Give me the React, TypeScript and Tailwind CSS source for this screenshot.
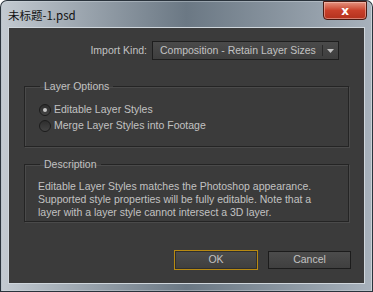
import React, { useState } from "react";

const font = { fontFamily: '"Liberation Sans", Arial, sans-serif' };

function Radio({ checked, label, onClick }: { checked: boolean; label: string; onClick: () => void }) {
  return (
    <button type="button" onClick={onClick} className="flex items-center gap-[3px] h-[16px] text-[10.5px] text-[#c2c2c2]">
      <span className="w-[12px] h-[12px] rounded-full border border-[#1c1c1c] bg-gradient-to-b from-[#2e2e2e] to-[#444] flex items-center justify-center">
        {checked && <span className="w-[4px] h-[4px] rounded-full bg-[#c8c8c8]" />}
      </span>
      <span>{label}</span>
    </button>
  );
}

function Group({ title, className, children }: { title: string; className?: string; children: React.ReactNode }) {
  return (
    <fieldset className={"border border-[#242424] shadow-[inset_1px_1px_0_#4a4a4a,1px_1px_0_#4a4a4a] px-[13px] " + (className ?? "")}>
      <legend className="ml-[2px] px-[4px] text-[10.5px] text-[#c2c2c2] leading-[14px]">{title}</legend>
      {children}
    </fieldset>
  );
}

export default function App() {
  const [editable, setEditable] = useState(true);

  return (
    <div style={font} className="w-[373px] h-[292px] bg-[#2a333c] p-[1px] rounded-t-[7px]">
      <div className="w-full h-full rounded-t-[6px] bg-gradient-to-r from-[#c3cad1] via-[#6b7884] to-[#a7b1bb] flex flex-col border border-[#d8dee4]/40">
        {/* title bar */}
        <div className="h-[25px] flex items-start justify-between">
          <span
            className="pl-[6px] pt-[5px] text-[11.5px] leading-[16px] text-[#111]"
            style={{ fontFamily: '"Noto Sans CJK SC", "Liberation Sans", sans-serif' }}
          >
            未标题-1.psd
          </span>
          <div className="mr-[4px] mt-[-1px] w-[44px] h-[19px] rounded-b-[4px] border border-[#4a1a12] bg-gradient-to-b from-[#e3927f] via-[#c8402a] to-[#b4311d] shadow-[inset_0_0_0_1px_rgba(255,220,210,0.45)] flex items-center justify-center">
            <span className="text-white text-[12px] font-bold leading-none" style={{ fontFamily: '"DejaVu Sans", sans-serif' }}>x</span>
          </div>
        </div>

        {/* content */}
        <div className="flex-1 mx-[6px] mb-[6px] border border-[#cfd6dc] bg-[#3b3b3b] flex flex-col">
          <div className="flex items-center justify-end pr-[25px] mt-[13px] gap-[5px]">
            <span className="text-[10.5px] text-[#c2c2c2] whitespace-nowrap">Import Kind:</span>
            <div className="w-[187px] h-[19px] border border-[#1e1e1e] bg-gradient-to-b from-[#4a4a4a] to-[#3e3e3e] flex items-center text-[10.5px] text-[#c2c2c2]">
              <span className="flex-1 pl-[7px] whitespace-nowrap">Composition - Retain Layer Sizes</span>
              <span className="w-px h-[11px] bg-[#2a2a2a]" />
              <span className="w-[15px] flex justify-center">
                <svg width="7" height="4" viewBox="0 0 7 4"><path d="M0 0h7L3.5 4z" fill="#c2c2c2" /></svg>
              </span>
            </div>
          </div>

          <Group title="Layer Options" className="mx-[15px] mt-[19px] h-[68px] pt-[9px]">
            <div className="flex flex-col items-start pl-[1px]">
              <Radio checked={editable} label="Editable Layer Styles" onClick={() => setEditable(true)} />
              <Radio checked={!editable} label="Merge Layer Styles into Footage" onClick={() => setEditable(false)} />
            </div>
          </Group>

          <Group title="Description" className="mx-[15px] mt-[10px] h-[65px] pt-[9px]">
            <p className="pl-[0px] text-[10.5px] leading-[13px] text-[#c2c2c2] whitespace-nowrap">
              Editable Layer Styles matches the Photoshop appearance.
              <br />
              Supported style properties will be fully editable. Note that a
              <br />
              layer with a layer style cannot intersect a 3D layer.
            </p>
          </Group>

          <div className="flex justify-end gap-[10px] pr-[13px] mt-[28px]">
            <button className="w-[84px] h-[20px] border border-[#b88a12] bg-[#2e2e2e] p-px">
              <span className="w-full h-full flex items-center justify-center bg-gradient-to-b from-[#4c4c4c] to-[#3f3f3f] text-[10.5px] text-[#c2c2c2]">OK</span>
            </button>
            <button className="w-[83px] h-[18px] mt-px border border-[#1c1c1c] bg-gradient-to-b from-[#4c4c4c] to-[#3f3f3f] flex items-center justify-center text-[10.5px] text-[#c2c2c2]">
              Cancel
            </button>
          </div>
        </div>
      </div>
    </div>
  );
}
